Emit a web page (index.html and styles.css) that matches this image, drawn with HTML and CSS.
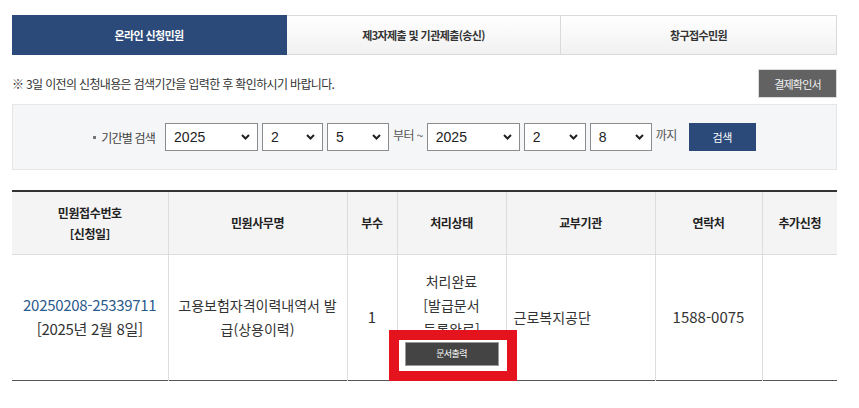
FILE: index.html
```html
<html lang="ko">

<head>
    <meta charset="UTF-8">
    <meta name="viewport" content="width=device-width, initial-scale=1.0">
    <title>신청민원 조회</title>
    <link rel="stylesheet" href="styles.css">
</head>

<body>
    <section id="main">
        <ul class="tabs">
            <li class="tab on">온라인 신청민원</li>
            <li class="tab">제3자제출 및 기관제출(송신)</li>
            <li class="tab">창구접수민원</li>
        </ul>

        <div class="notice-row">
            <p class="notice">※ 3일 이전의 신청내용은 검색기간을 입력한 후 확인하시기 바랍니다.</p>
            <button class="btn-gray">결제확인서</button>
        </div>

        <div class="search-box">
            <span class="label"><i class="dot"></i>기간별 검색</span>
            <span class="sel w93"><select><option>2025</option></select><svg viewBox="0 0 9 6"><polyline points="1,1 4.5,4.5 8,1"/></svg></span>
            <span class="sel w61"><select><option>2</option></select><svg viewBox="0 0 9 6"><polyline points="1,1 4.5,4.5 8,1"/></svg></span>
            <span class="sel w62"><select><option>5</option></select><svg viewBox="0 0 9 6"><polyline points="1,1 4.5,4.5 8,1"/></svg></span>
            <span class="word">부터 ~</span>
            <span class="sel w93"><select><option>2025</option></select><svg viewBox="0 0 9 6"><polyline points="1,1 4.5,4.5 8,1"/></svg></span>
            <span class="sel w62"><select><option>2</option></select><svg viewBox="0 0 9 6"><polyline points="1,1 4.5,4.5 8,1"/></svg></span>
            <span class="sel w62"><select><option>8</option></select><svg viewBox="0 0 9 6"><polyline points="1,1 4.5,4.5 8,1"/></svg></span>
            <span class="word">까지</span>
            <button class="btn-search">검색</button>
        </div>

        <table class="list">
            <colgroup>
                <col style="width:156px">
                <col style="width:179px">
                <col style="width:50px">
                <col style="width:109px">
                <col style="width:149px">
                <col style="width:107px">
                <col style="width:75px">
            </colgroup>
            <thead>
                <tr>
                    <th>민원접수번호<br>[신청일]</th>
                    <th>민원사무명</th>
                    <th>부수</th>
                    <th>처리상태</th>
                    <th>교부기관</th>
                    <th>연락처</th>
                    <th>추가신청</th>
                </tr>
            </thead>
            <tbody>
                <tr>
                    <td class="no"><a href="#">20250208-25339711</a><br>[2025년 2월 8일]</td>
                    <td class="name">고용보험자격이력내역서 발급(상용이력)</td>
                    <td class="num">1</td>
                    <td class="status">
                        처리완료 [발급문서 등록완료]
                        <div class="print-wrap">
                            <span class="mark"></span>
                            <button class="btn-print">문서출력</button>
                        </div>
                    </td>
                    <td class="org">근로복지공단</td>
                    <td class="num">1588-0075</td>
                    <td></td>
                </tr>
            </tbody>
        </table>
    </section>
</body>

</html>
```

FILE: styles.css
```css
body {
    margin: 0;
    background-color: #fff;
    font-family: "Noto Sans CJK KR", sans-serif;
    color: #333;
}
#main {
    width: 825px;
    padding: 15px 12px 0;
}

/* tabs */
.tabs {
    display: grid;
    grid-template-columns: 275px 274px 276px;
    height: 40px;
    margin: 0;
    padding: 0;
    list-style-type: none;
}
.tab {
    display: flex;
    align-items: center;
    justify-content: center;
    border: 1px solid #dadada;
    border-left: none;
    background: linear-gradient(#fff, #f1f1f1);
    font-size: 11px;
    font-weight: bold;
    letter-spacing: -0.6px;
    color: #333;
}
.tab.on {
    background: #2b4a7a;
    border-color: #2b4a7a;
    color: #fff;
}

/* notice */
.notice-row {
    display: flex;
    justify-content: space-between;
    align-items: center;
    height: 29px;
    margin-top: 14px;
}
.notice {
    margin: 0;
    font-size: 12px;
    letter-spacing: -0.65px;
    color: #333;
}
.btn-gray {
    width: 79px;
    height: 29px;
    border: 1px solid #dcdcdc;
    background-color: #626262;
    color: #f2f2f2;
    font-family: inherit;
    font-size: 11px;
    letter-spacing: -0.8px;
}

/* search */
.search-box {
    display: flex;
    align-items: center;
    justify-content: center;
    gap: 4px;
    height: 66px;
    box-sizing: border-box;
    margin-top: 6px;
    border: 1px solid #e6e6e6;
    background-color: #f5f6f8;
}
.label {
    display: flex;
    align-items: center;
    margin-right: 6px;
    font-size: 12px;
    letter-spacing: -0.8px;
    color: #444;
}
.dot {
    width: 3px;
    height: 3px;
    margin-right: 5px;
    background-color: #777;
}
.word {
    font-size: 12px;
    letter-spacing: -0.6px;
    color: #555;
    margin-top: -6px;
}
.sel {
    position: relative;
    display: block;
}
.sel select {
    -webkit-appearance: none;
    appearance: none;
    height: 28px;
    padding: 0 0 0 8px;
    border: 1px solid #8c8c8c;
    border-radius: 0;
    background-color: #fff;
    font-family: "Liberation Sans", sans-serif;
    font-size: 14px;
    color: #222;
}
.sel svg {
    position: absolute;
    right: 8px;
    top: 11px;
    width: 9px;
    height: 6px;
    fill: none;
    stroke: #222;
    stroke-width: 2;
}
.w93 select { width: 93px; }
.w62 select { width: 62px; }
.w61 select { width: 61px; }
.btn-search {
    width: 67px;
    height: 28px;
    margin-left: 8px;
    border: none;
    background-color: #2b4a7a;
    color: #fff;
    font-family: inherit;
    font-size: 11px;
    letter-spacing: -0.4px;
}

/* list */
.list {
    width: 825px;
    margin-top: 20px;
    border-collapse: collapse;
    table-layout: fixed;
    border-top: 2px solid #333;
    border-bottom: 1px solid #555;
}
.list th {
    height: 63px;
    padding: 0 4px;
    background-color: #f4f4f4;
    border-bottom: 1px solid #ddd;
    font-size: 12px;
    font-weight: bold;
    letter-spacing: -0.4px;
    line-height: 21px;
    color: #222;
}
.list th + th,
.list td + td {
    border-left: 1px solid #ddd;
}
.list td {
    padding: 14px 8px;
    text-align: center;
    vertical-align: middle;
    font-size: 14px;
    letter-spacing: 0;
    line-height: 24px;
    color: #333;
}
.list td.no {
    font-size: 15px;
    letter-spacing: -0.3px;
}
.no a {
    color: #2b5b8c;
    text-decoration: none;
}
.list td.name {
    padding: 14px 7px;
}
.list td.num {
    font-size: 15px;
}
.list td.org {
    text-align: left;
    padding-left: 7px;
}
.list td.status {
    padding: 14px 6px;
    word-break: keep-all;
}
.print-wrap {
    position: relative;
    width: 94px;
    margin: 1px auto 0;
}
.mark {
    position: absolute;
    top: -12px;
    left: -16px;
    right: -18px;
    bottom: -15px;
    border: 10px solid #e5131d;
    background-color: #fff;
}
.btn-print {
    position: relative;
    display: block;
    width: 94px;
    height: 24px;
    border: 1px solid #9a9a9a;
    background-color: #444;
    color: #fff;
    font-family: inherit;
    font-size: 9px;
    letter-spacing: -0.6px;
}
```
